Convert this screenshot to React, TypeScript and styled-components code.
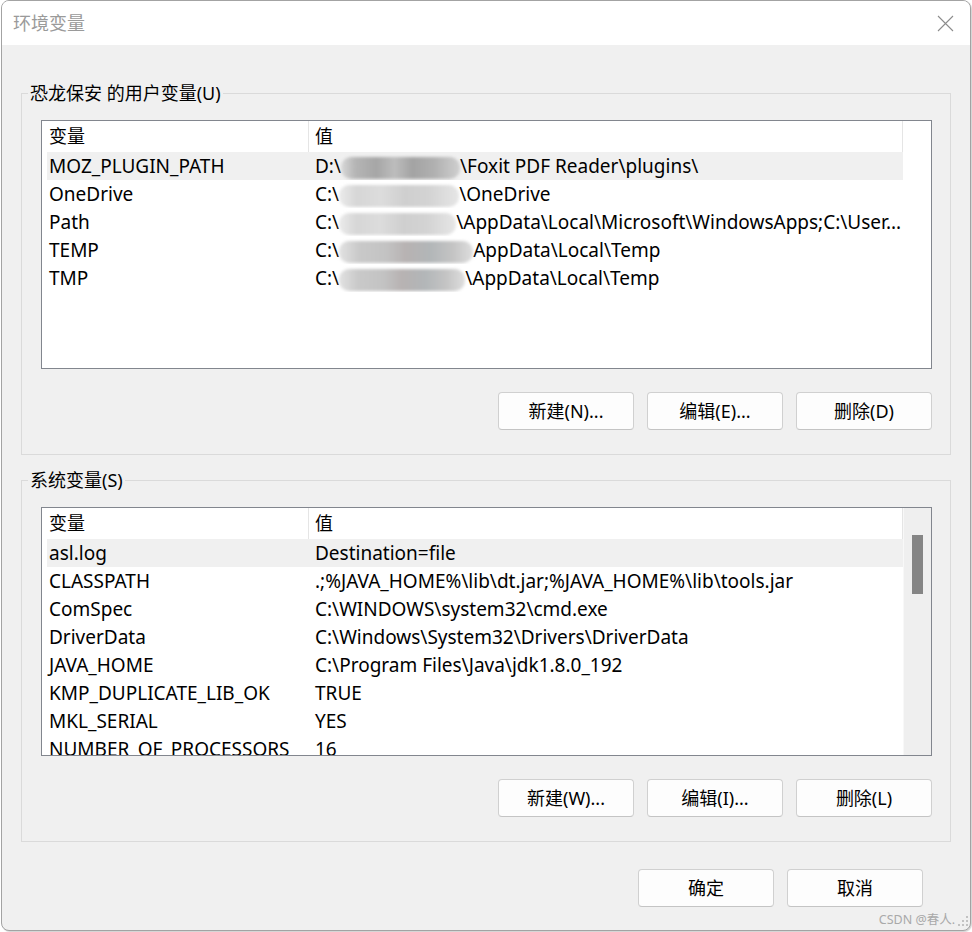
import React from 'react';
import styled, { createGlobalStyle } from 'styled-components';

const GlobalStyle = createGlobalStyle`
  html, body { margin: 0; padding: 0; background: #ffffff; }
  body {
    font-family: "Noto Sans", "Noto Sans CJK SC", sans-serif;
    color: #000000;
  }
  #root { width: 972px; height: 932px; overflow: hidden; }
`;

const Window = styled.div`
  position: relative;
  box-sizing: border-box;
  width: 970px;
  height: 931px;
  margin-left: 1px;
  border: 1px solid #a3a3a3;
  border-radius: 8px;
  background: #f0f0f0;
  box-shadow: 1px 1px 1px rgba(0, 0, 0, 0.18);
  display: flex;
  flex-direction: column;
  overflow: hidden;
`;

const TitleBar = styled.div`
  height: 44px;
  flex: none;
  background: #ffffff;
  display: flex;
  align-items: center;
  justify-content: space-between;
  padding: 0 16px 0 11px;
`;

const Title = styled.span`
  font-size: 18px;
  color: #9a9a9a;
  line-height: 24px;
`;

const CloseIcon = styled.svg`
  width: 17px;
  height: 17px;
  margin-top: 1px;
`;

const Body = styled.div`
  flex: 1;
  display: flex;
  flex-direction: column;
  padding: 36px 19px 0 19px;
`;

const Group = styled.fieldset<{ $gap?: number }>`
  margin: ${(p) => p.$gap ?? 0}px 0 0 0;
  padding: 15px 18px 24px 19px;
  min-width: 0;
  border: 1px solid #dadada;
  display: flex;
  flex-direction: column;
`;

const Legend = styled.legend`
  margin-left: -13px;
  padding: 0 2px;
  font-size: 18px;
  line-height: 24px;
  color: #000;
`;

const ListBox = styled.div`
  box-sizing: border-box;
  height: 249px;
  border: 1px solid #82868e;
  background: #ffffff;
  display: flex;
  overflow: hidden;
`;

const ListMain = styled.div`
  flex: 1;
  padding-left: 5px;
  overflow: hidden;
`;

const Table = styled.div`
  width: 856px;
  display: flex;
  flex-direction: column;
`;

const HeaderRow = styled.div`
  height: 31px;
  display: grid;
  grid-template-columns: 261px 1fr;
  border-right: 1px solid #e5e5e5;
`;

const HeaderCell = styled.div<{ $first?: boolean }>`
  font-size: 18px;
  line-height: 31px;
  padding-left: ${(p) => (p.$first ? 2 : 6)}px;
  border-left: ${(p) => (p.$first ? 'none' : '1px solid #e5e5e5')};
  white-space: nowrap;
`;

const Row = styled.div<{ $selected?: boolean }>`
  height: 28px;
  display: grid;
  grid-template-columns: 261px 1fr;
  background: ${(p) => (p.$selected ? '#f0f0f0' : 'transparent')};
`;

const Cell = styled.div<{ $first?: boolean }>`
  font-size: 19px;
  line-height: 28px;
  padding-left: ${(p) => (p.$first ? 2 : 7)}px;
  white-space: nowrap;
  overflow: hidden;
`;

const Redacted = styled.span<{ $tone: 'dark' | 'mid' | 'light' }>`
  display: inline-block;
  height: 22px;
  vertical-align: -6px;
  border-radius: 10px;
  filter: blur(1.6px);
  background: ${(p) =>
    p.$tone === 'dark'
      ? 'linear-gradient(90deg, #d8d8d8 0%, #b5b5b5 12%, #a6a6a6 30%, #bdbdbd 45%, #a3a3a3 60%, #b0b0b0 78%, #cfcfcf 100%)'
      : p.$tone === 'mid'
      ? 'linear-gradient(90deg, #e2e2e2 0%, #c9c9c9 15%, #c3c3c3 35%, #b7b2b2 50%, #b2b6b8 68%, #c4c4c4 85%, #dedede 100%)'
      : 'linear-gradient(90deg, #ebebeb 0%, #d6d6d6 15%, #dcdcdc 35%, #cfcfcf 55%, #d3d3d3 75%, #e6e6e6 100%)'};
`;

const Scrollbar = styled.div`
  width: 27px;
  flex: none;
  background: #efefef;
  border-left: 1px solid #f8f8f8;
`;

const Thumb = styled.div`
  width: 11px;
  height: 59px;
  margin: 27px 0 0 8px;
  background: #858585;
`;

const ButtonRow = styled.div<{ $top: number; $right?: number }>`
  display: flex;
  justify-content: flex-end;
  gap: 13px;
  margin-top: ${(p) => p.$top}px;
  margin-right: ${(p) => p.$right ?? 0}px;
`;

const Button = styled.button`
  box-sizing: border-box;
  width: 136px;
  height: 38px;
  padding: 0;
  border: 1px solid #d0d0d0;
  border-bottom-color: #c4c4c4;
  border-radius: 4px;
  background: #fdfdfd;
  font-family: "Noto Sans", "Noto Sans CJK SC", sans-serif;
  font-size: 18px;
  color: #000;
  line-height: 36px;
`;

const Watermark = styled.div`
  position: absolute;
  right: 1px;
  bottom: 2px;
  font-size: 12.5px;
  color: #a9a9a9;
  display: flex;
  align-items: flex-end;
  gap: 2px;
`;

const Grip = styled.svg`
  width: 12px;
  height: 12px;
  margin-bottom: 1px;
`;

type Tone = 'dark' | 'mid' | 'light';
type Entry = { name: string; value?: string; pre?: string; blur?: number; post?: string; tone?: Tone };

const userVars: Entry[] = [
  { name: 'MOZ_PLUGIN_PATH', pre: 'D:\\', blur: 119, post: '\\Foxit PDF Reader\\plugins\\', tone: 'dark' },
  { name: 'OneDrive', pre: 'C:\\', blur: 120, post: '\\OneDrive', tone: 'light' },
  { name: 'Path', pre: 'C:\\', blur: 117, post: '\\AppData\\Local\\Microsoft\\WindowsApps;C:\\User...', tone: 'light' },
  { name: 'TEMP', pre: 'C:\\', blur: 134, post: 'AppData\\Local\\Temp', tone: 'mid' },
  { name: 'TMP', pre: 'C:\\', blur: 126, post: '\\AppData\\Local\\Temp', tone: 'mid' },
];

const systemVars: Entry[] = [
  { name: 'asl.log', value: 'Destination=file' },
  { name: 'CLASSPATH', value: '.;%JAVA_HOME%\\lib\\dt.jar;%JAVA_HOME%\\lib\\tools.jar' },
  { name: 'ComSpec', value: 'C:\\WINDOWS\\system32\\cmd.exe' },
  { name: 'DriverData', value: 'C:\\Windows\\System32\\Drivers\\DriverData' },
  { name: 'JAVA_HOME', value: 'C:\\Program Files\\Java\\jdk1.8.0_192' },
  { name: 'KMP_DUPLICATE_LIB_OK', value: 'TRUE' },
  { name: 'MKL_SERIAL', value: 'YES' },
  { name: 'NUMBER_OF_PROCESSORS', value: '16' },
];

function VarList({ rows, scroll }: { rows: Entry[]; scroll?: boolean }) {
  return (
    <ListBox>
      <ListMain>
        <Table>
          <HeaderRow>
            <HeaderCell $first>变量</HeaderCell>
            <HeaderCell>值</HeaderCell>
          </HeaderRow>
          {rows.map((r, i) => (
            <Row key={r.name} $selected={i === 0}>
              <Cell $first>{r.name}</Cell>
              <Cell>
                {r.value !== undefined ? (
                  r.value
                ) : (
                  <>
                    {r.pre}
                    <Redacted $tone={r.tone ?? 'mid'} style={{ width: r.blur }} />
                    {r.post}
                  </>
                )}
              </Cell>
            </Row>
          ))}
        </Table>
      </ListMain>
      {scroll && (
        <Scrollbar>
          <Thumb />
        </Scrollbar>
      )}
    </ListBox>
  );
}

export default function App() {
  return (
    <>
      <GlobalStyle />
      <Window>
        <TitleBar>
          <Title>环境变量</Title>
          <CloseIcon viewBox="0 0 17 17">
            <path d="M1 1 L16 16 M16 1 L1 16" stroke="#8c8c8c" strokeWidth="1.1" fill="none" />
          </CloseIcon>
        </TitleBar>
        <Body>
          <Group>
            <Legend>恐龙保安 的用户变量(U)</Legend>
            <VarList rows={userVars} />
            <ButtonRow $top={23}>
              <Button>新建(N)...</Button>
              <Button>编辑(E)...</Button>
              <Button>删除(D)</Button>
            </ButtonRow>
          </Group>
          <Group $gap={13}>
            <Legend>系统变量(S)</Legend>
            <VarList rows={systemVars} scroll />
            <ButtonRow $top={23}>
              <Button>新建(W)...</Button>
              <Button>编辑(I)...</Button>
              <Button>删除(L)</Button>
            </ButtonRow>
          </Group>
          <ButtonRow $top={27} $right={28}>
            <Button>确定</Button>
            <Button>取消</Button>
          </ButtonRow>
        </Body>
        <Watermark>
          <span>CSDN @春人.</span>
          <Grip viewBox="0 0 12 12">
            {[
              [10, 2],
              [10, 6],
              [6, 6],
              [10, 10],
              [6, 10],
              [2, 10],
            ].map(([x, y]) => (
              <rect key={`${x}-${y}`} x={x - 1} y={y - 1} width="2" height="2" fill="#c2c2c2" />
            ))}
          </Grip>
        </Watermark>
      </Window>
    </>
  );
}
